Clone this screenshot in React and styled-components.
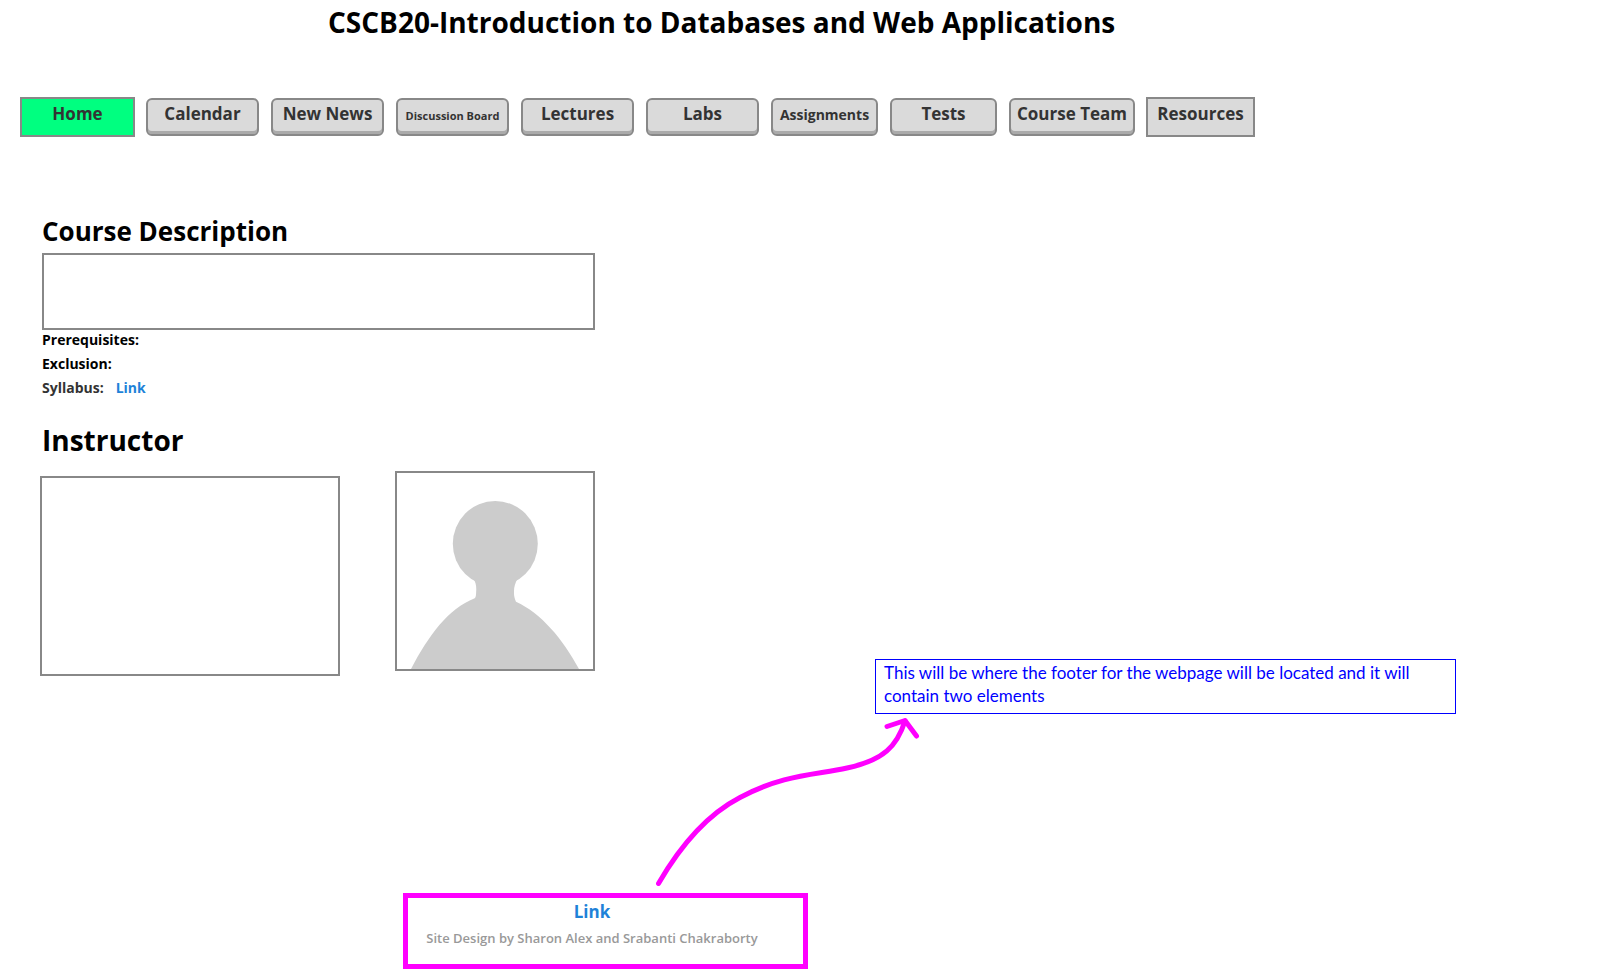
import React from 'react';
import styled, { createGlobalStyle, css } from 'styled-components';

const GlobalStyle = createGlobalStyle`
  *, *::before, *::after { box-sizing: border-box; }
  body {
    margin: 0;
    background: #fff;
    color: #000;
    font-family: 'Open Sans', 'Noto Sans', sans-serif;
    font-weight: 700;
  }
`;

const Page = styled.div`
  min-height: 100vh;
`;

const Title = styled.h1`
  margin: 0;
  padding: 2px 0 0 328px;
  font-size: 28px;
  font-weight: 700;
  line-height: 40px;
`;

const NavBar = styled.nav`
  display: flex;
  align-items: center;
  gap: 12px;
  padding: 56px 20px 75px 21px;
`;

const NavButton = styled.button`
  flex: none;
  width: ${({ $width }) => $width}px;
  height: 38px;
  padding: 2px 0 8px;
  border: 2px solid #888;
  border-radius: 6px;
  background: #dadada;
  box-shadow: inset 0 -3px 0 #aaa;
  color: #333;
  font: inherit;
  font-size: 17px;
  line-height: 24px;
  text-align: center;
  white-space: nowrap;
  cursor: pointer;

  ${({ $square, $width }) =>
    $square &&
    css`
      width: ${$width + 2}px;
      height: 40px;
      margin: -1px;
      border-radius: 0;
      box-shadow: none;
    `}

  ${({ $active }) => $active && css`background: #00ff80;`}
`;

const NavLabel = styled.span`
  font-size: ${({ $size }) => $size}px;
`;

const Body = styled.div`
  display: flex;
  align-items: flex-start;
`;

const Content = styled.main`
  flex: none;
  width: 595px;
  padding-left: 40px;
`;

const CourseSection = styled.section`
  padding-left: 2px;
`;

const Heading = styled.h2`
  margin: 0;
  font-size: ${({ $size }) => $size}px;
  font-weight: 700;
  line-height: 40px;
`;

const Frame = styled.div`
  border: 2px solid #888;
  background: #fff;
`;

const DescriptionBox = styled(Frame)`
  height: 77px;
  margin-top: 2px;
`;

const Facts = styled.ul`
  display: flex;
  flex-direction: column;
  gap: 4px;
  margin: 0;
  padding: 0;
  list-style: none;
  font-size: 14px;
  line-height: 20px;
`;

const Fact = styled.li`
  display: flex;
  gap: 12px;
  color: ${({ $muted }) => ($muted ? '#333' : '#000')};
`;

const TextLink = styled.a`
  color: #1e82d8;
  text-decoration: none;
`;

const InstructorSection = styled.section`
  padding-top: 22px;
`;

const InstructorHeading = styled(Heading)`
  padding-left: 2px;
`;

const InstructorRow = styled.div`
  display: flex;
  justify-content: space-between;
  padding-top: 11px;
`;

const InstructorBox = styled(Frame)`
  width: 300px;
  height: 200px;
  margin-top: 5px;
`;

const Photo = styled(Frame)`
  width: 200px;
  height: 200px;

  svg { display: block; }
`;

const Aside = styled.aside`
  flex: 1;
  max-width: 861px;
  padding: 448px 0 0 280px;
`;

const Note = styled.p`
  min-height: 55px;
  margin: 0;
  padding: 1px 8px;
  border: 1px solid #00f;
  color: #00f;
  font-family: Lato, sans-serif;
  font-size: 17px;
  font-weight: 400;
  font-variant-ligatures: none;
  line-height: 23px;
`;

const Arrow = styled.svg`
  display: block;
  margin-left: 656px;
`;

const Footer = styled.footer`
  display: flex;
  flex-direction: column;
  align-items: center;
  gap: 2px;
  width: 405px;
  height: 76px;
  margin-left: 403px;
  padding: 2px 45px 0 18px;
  border: 5px solid #f0f;
  line-height: 24px;
`;

const FooterLink = styled(TextLink)`
  font-size: 17px;
`;

const Credit = styled.span`
  color: #999;
  font-size: 13px;
  font-weight: 600;
  white-space: nowrap;
`;

const NAV_ITEMS = [
  { label: 'Home', width: 113, square: true, active: true },
  { label: 'Calendar', width: 113 },
  { label: 'New News', width: 113 },
  { label: 'Discussion Board', width: 113, size: 11 },
  { label: 'Lectures', width: 113 },
  { label: 'Labs', width: 113 },
  { label: 'Assignments', width: 107, size: 14 },
  { label: 'Tests', width: 107 },
  { label: 'Course Team', width: 126 },
  { label: 'Resources', width: 107, square: true },
];

export default function App() {
  return (
    <Page>
      <GlobalStyle />
      <header>
        <Title>CSCB20-Introduction to Databases and Web Applications</Title>
        <NavBar aria-label="Main">
          {NAV_ITEMS.map(({ label, width, size = 17, square, active }) => (
            <NavButton
              key={label}
              type="button"
              $width={width}
              $square={square}
              $active={active}
              aria-current={active ? 'page' : undefined}
            >
              <NavLabel $size={size}>{label}</NavLabel>
            </NavButton>
          ))}
        </NavBar>
      </header>

      <Body>
        <Content>
          <CourseSection>
            <Heading $size={26}>Course Description</Heading>
            <DescriptionBox />
            <Facts>
              <Fact>Prerequisites:</Fact>
              <Fact>Exclusion:</Fact>
              <Fact $muted>
                <span>Syllabus:</span>
                <TextLink href="#syllabus">Link</TextLink>
              </Fact>
            </Facts>
          </CourseSection>
          <InstructorSection>
            <InstructorHeading $size={28}>Instructor</InstructorHeading>
            <InstructorRow>
              <InstructorBox />
              <Photo>
                <svg width="196" height="196" viewBox="0 0 196 196" fill="#ccc" role="img" aria-label="Instructor">
                  <ellipse cx="98.3" cy="70.8" rx="42.5" ry="42.8" />
                  <path d="M76 105C79 109 79.5 114 79.2 118C79 122 79 124 77.7 125.3C51 136 32 162 14 196H182C166 166 144 140 119 128.7C117 124 117 122 117 118C117 114 118 110 121 105Z" />
                </svg>
              </Photo>
            </InstructorRow>
          </InstructorSection>
        </Content>
        <Aside>
          <Note>
            This will be where the footer for the webpage will be located and it will contain two elements
          </Note>
        </Aside>
      </Body>

      <Arrow width="264" height="179" viewBox="0 0 264 179" fill="none" stroke="#f0f" strokeWidth="5" strokeLinecap="round" strokeLinejoin="round" aria-hidden="true">
        <path d="M2.5 169.5C30 122 58 97 84 83.5C128 60 160 61 191 54C228 46 241 32 249 7" />
        <path d="M231 12.5L249 6.5L260.500 22" />
      </Arrow>

      <Footer>
        <FooterLink href="#contact">Link</FooterLink>
        <Credit>Site Design by Sharon Alex and Srabanti Chakraborty</Credit>
      </Footer>
    </Page>
  );
}
